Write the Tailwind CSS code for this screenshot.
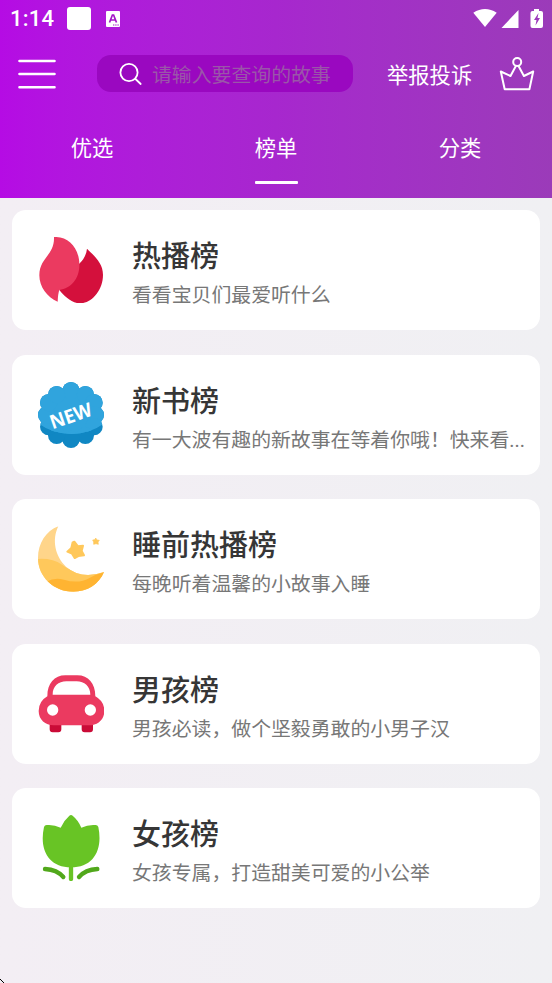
<!DOCTYPE html>
<html lang="zh-CN">
<head>
<meta charset="utf-8">
<meta name="viewport" content="width=device-width, initial-scale=1">
<title>榜单</title>
<script src="https://cdn.jsdelivr.net/npm/@tailwindcss/browser@4"></script>
</head>
<body class="font-['Noto_Sans_CJK_SC',sans-serif]">
<div class="relative flex h-[983px] w-[552px] flex-col overflow-hidden bg-linear-to-r from-[#f3eef4] to-[#f0f0f3]">
  <header class="flex h-[198px] shrink-0 flex-col bg-linear-to-r from-[#b50be4] via-[#a727ce] to-[#9b3bb9] text-white">
    <!-- status bar -->
    <div class="flex h-[37px] shrink-0 items-center pl-[10px]">
      <span class="w-[57px] font-[Roboto,sans-serif] text-[22px] leading-none font-medium tracking-[0.2px]">1:14</span>
      <span class="h-[23px] w-[24px] rounded-[3px] bg-white"></span>
      <svg class="ml-[15px]" width="14" height="16" viewBox="0 0 14 16"><rect width="14" height="16" rx="1" fill="#fff"/><path d="M3.5 11.5 6.4 4h1.2l2.9 7.5M4.7 9h4.6" fill="none" stroke="#a316c8" stroke-width="1.7"/><path d="M7 14h6" stroke="#a316c8" stroke-width="1" stroke-dasharray="1.4 .8"/></svg>
      <svg class="mt-px ml-auto" width="79" height="22" viewBox="0 0 79 22"><g fill="#fff"><path d="M.3 4.7Q12 -2.8 23.7 4.7L12 19Z"/><path d="M45.5 2v18h-17Z"/><path d="M61 1h5v2h2q2 0 2 2v13q0 2-2 2h-8.500q-2 0-2-2V5q0-2 2-2H61Z"/></g><path d="m65.500 5-4.500 7h2.500l-1 5.500 4.500-7.500h-2.500Z" fill="#9d38bc"/></svg>
    </div>
    <div class="flex h-[73px] shrink-0 items-center">
      <svg class="ml-[18px]" width="39" height="32" viewBox="0 0 39 32" fill="none" stroke="#fff" stroke-width="2.600" stroke-linecap="round"><path d="M1.500 3h35M1.500 16h35M1.500 29.200h35"/></svg>
      <div class="ml-[40px] flex h-[37px] w-[256px] items-center rounded-[14px] bg-[#9a08c0]">
        <svg class="ml-[22px]" width="24" height="24" viewBox="0 0 24 24" fill="none" stroke="#fff" stroke-width="1.800" stroke-linecap="round"><circle cx="10" cy="10.500" r="8.600"/><path d="m16.500 17 5.200 5"/></svg>
        <span class="ml-[9px] text-[19.87px] leading-none whitespace-nowrap text-[#9a56a9]">请输入要查询的故事</span>
      </div>
      <span class="ml-[34px] text-[21.3px] leading-none whitespace-nowrap">举报投诉</span>
      <svg class="ml-[27px]" width="36" height="36" viewBox="0 0 36 36" fill="none" stroke="#fff" stroke-width="2" stroke-linejoin="round"><circle cx="18.200" cy="6" r="4"/><path d="m17 9.700-5.500 10.300-9.700-4.500 3.900 17.800h24.700L34.200 15.500 24.900 20 19.400 9.700"/></svg>
    </div>
    <nav class="grid h-[88px] grid-cols-3 text-center text-[21.3px] leading-[74px]">
      <div>优选</div>
      <div class="flex flex-col items-center"><span class="h-[71px]">榜单</span><span class="h-[3px] w-[43px] rounded-[1px] bg-white"></span></div>
      <div>分类</div>
    </nav>
  </header>

  <main class="flex flex-col gap-[24.4px] px-[12px] pt-[12.4px]">
    <section class="flex h-[120px] rounded-[14px] bg-white pt-[27px] pl-[26px]">
      <svg class="shrink-0" width="66" height="66" viewBox="54 52 198 198"><path d="M201 87C219 106 249 128 249 165C249 215 212 251 180 251C155 251 132 228 118 211C140 170 160 145 177 133C190 121 199 106 201 87Z" fill="#d4103c"/><path d="M102 52C145 50 177 84 178 133C180 173 155 206 118 211Q114 222 113 246C81 233 58 201 58 167C58 114 104 107 102 52Z" fill="#eb3a60"/></svg>
      <div class="min-w-0 pr-[14px] pl-[28px]"><h2 class="text-[29px] leading-[34px] font-medium whitespace-nowrap text-[#363636]">热播榜</h2><p class="mt-[9px] truncate text-[19.87px] leading-[28px] text-[#777]">看看宝贝们最爱听什么</p></div>
    </section>
    <section class="flex h-[120px] rounded-[14px] bg-white pt-[27px] pl-[26px]">
      <svg class="shrink-0" width="66" height="66" viewBox="54 36 198 198"><defs><clipPath id="upper"><path d="M40 20H270V150L253 160Q210 192 154 192Q98 192 54 160L40 150Z"/></clipPath><g id="badge"><circle cx="153" cy="135" r="77"/><circle cx="153" cy="62" r="26"/><circle cx="196" cy="74" r="26"/><circle cx="222" cy="98" r="26"/><circle cx="226" cy="135" r="26"/><circle cx="222" cy="170" r="26"/><circle cx="196" cy="196" r="26"/><circle cx="153" cy="208" r="26"/><circle cx="110" cy="196" r="26"/><circle cx="86" cy="170" r="26"/><circle cx="80" cy="135" r="26"/><circle cx="86" cy="98" r="26"/><circle cx="110" cy="74" r="26"/></g></defs><use href="#badge" fill="#1087c3"/><use href="#badge" fill="#30a4dd" clip-path="url(#upper)"/><text x="153" y="158" transform="rotate(-19 153 139)" text-anchor="middle" textLength="130" lengthAdjust="spacingAndGlyphs" font-family="Open Sans" font-weight="700" font-size="58" fill="#fff">NEW</text></svg>
      <div class="min-w-0 pr-[14px] pl-[28px]"><h2 class="text-[29px] leading-[34px] font-medium whitespace-nowrap text-[#363636]">新书榜</h2><p class="mt-[9px] truncate text-[19.87px] leading-[28px] text-[#777]">有一大波有趣的新故事在等着你哦！快来看<span class="font-[Roboto]">...</span></p></div>
    </section>
    <section class="flex h-[120px] rounded-[14px] bg-white pt-[27px] pl-[26px]">
      <svg class="shrink-0" width="66" height="66" viewBox="54 49 198 198"><defs><clipPath id="moon"><path d="M115 50C95 90 105 140 138 171Q184 211 252 187C236 224 202 246 160 246C101 246 54 201 54 145C54 101 78 64 115 50Z"/></clipPath></defs><g clip-path="url(#moon)"><path d="M40 30H270V260H40Z" fill="#ffd58a"/><path d="M50 148Q96 144 126 165Q170 201 260 180V260H40Z" fill="#ffc85b"/><path d="M80 216Q103 202 132 210Q175 224 210 204Q230 193 260 186V260H80Z" fill="#ffb432"/></g><path d="m163 96 11 14 15-2-4 16 7 13-17 2-11 6-8-13-14-6 12-11 4-17Z" fill="#ffc85b" stroke="#ffc85b" stroke-width="6" stroke-linejoin="round"/><path d="m227 85 4 6 7 1-4 5 1 7-7-2-7 2v-7l-3-6 7-1Z" fill="#ffc85b" stroke="#ffc85b" stroke-width="2" stroke-linejoin="round"/></svg>
      <div class="min-w-0 pr-[14px] pl-[28px]"><h2 class="text-[29px] leading-[34px] font-medium whitespace-nowrap text-[#363636]">睡前热播榜</h2><p class="mt-[9px] truncate text-[19.87px] leading-[28px] text-[#777]">每晚听着温馨的小故事入睡</p></div>
    </section>
    <section class="flex h-[120px] rounded-[14px] bg-white pt-[27px] pl-[26px]">
      <svg class="shrink-0" width="66" height="66" viewBox="54 32 198 198"><path d="M89 180h35v27q0 9-9 9H98q-9 0-9-9ZM185 180h34v27q0 9-9 9h-16q-9 0-9-9Z" fill="#ca0b37"/><path fill-rule="evenodd" d="M82 108C82 69 103 45 136 45H172C205 45 226 69 226 108Q253 123 253 152C253 178 232 195 208 195H101C76 195 56 178 56 152Q56 123 82 108ZM98 103H211C211 78 193 63 170 63H139C115 63 98 78 98 103Z" fill="#eb3a60"/><circle cx="98" cy="149" r="17" fill="#fff"/><circle cx="211" cy="149" r="17" fill="#fff"/></svg>
      <div class="min-w-0 pr-[14px] pl-[28px]"><h2 class="text-[29px] leading-[34px] font-medium whitespace-nowrap text-[#363636]">男孩榜</h2><p class="mt-[9px] truncate text-[19.87px] leading-[28px] text-[#777]">男孩必读，做个坚毅勇敢的小男子汉</p></div>
    </section>
    <section class="flex h-[120px] rounded-[14px] bg-white pt-[27px] pl-[26px]">
      <svg class="shrink-0" width="66" height="66" viewBox="54 45 198 198"><path d="M153 195v42" stroke="#68c425" stroke-width="13" stroke-linecap="round"/><path d="M148 47q5-4 10 0Q175 61 184 83Q204 73 227 75Q233 75 235 81C249 149 221 202 153 202C86 202 57 149 72 81Q74 75 80 75Q102 73 122 83Q132 61 148 47Z" fill="#68c425"/><path d="M75 207Q111 209 130 231M232 207Q196 209 177 231" fill="none" stroke="#51a81b" stroke-width="13" stroke-linecap="round"/></svg>
      <div class="min-w-0 pr-[14px] pl-[28px]"><h2 class="text-[29px] leading-[34px] font-medium whitespace-nowrap text-[#363636]">女孩榜</h2><p class="mt-[9px] truncate text-[19.87px] leading-[28px] text-[#777]">女孩专属，打造甜美可爱的小公举</p></div>
    </section>
  </main>
  <svg class="absolute bottom-0 left-0" width="4" height="4" viewBox="0 0 4 4" shape-rendering="crispEdges"><path d="M0 0h1v1H0zM1 1h1v1H1zM2 2h1v1H2zM3 3h1v1H3z" fill="#000"/></svg>
</div>
</body>
</html>
